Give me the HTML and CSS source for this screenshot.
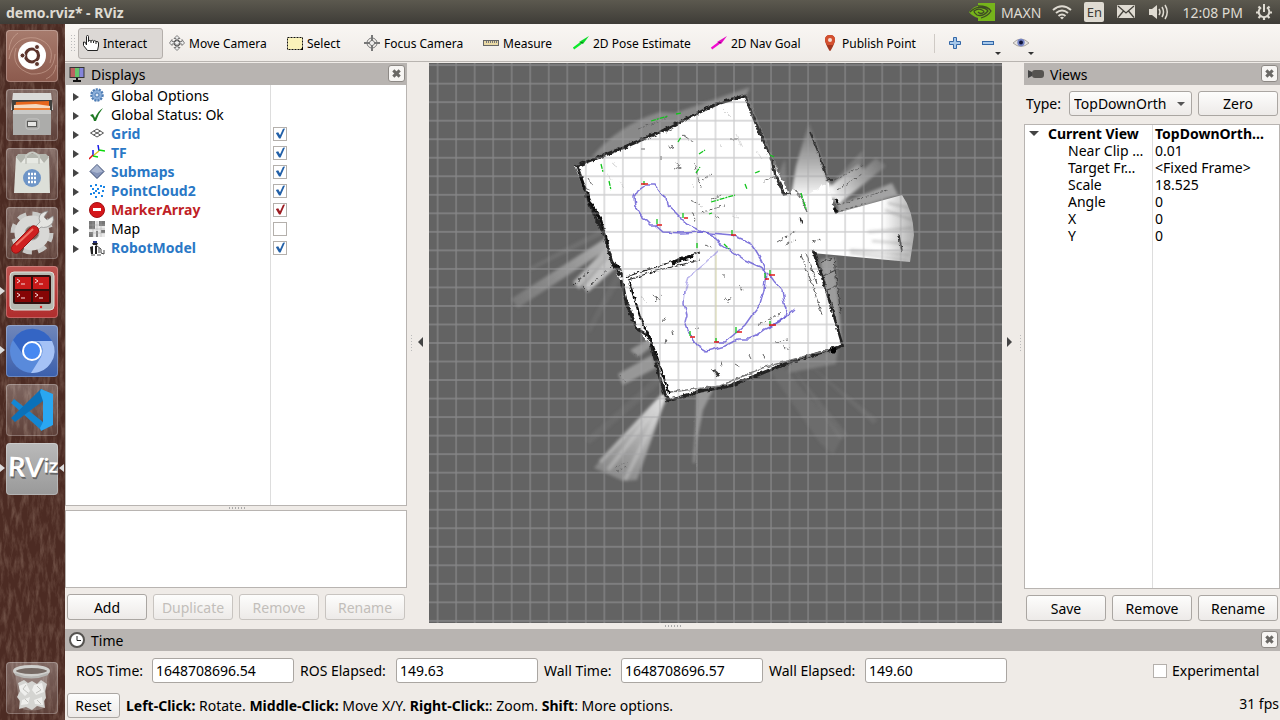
FILE: index.html
```html
<!DOCTYPE html>
<html lang="en">
<head>
<meta charset="utf-8">
<title>demo.rviz* - RViz</title>
<link rel="stylesheet" href="styles.css">
</head>
<body>
<header class="menubar">
  <h1 class="window-title">demo.rviz* - RViz</h1>
  <div class="indicators">
    <svg class="ind-nvidia" width="26" height="18" viewBox="0 0 26 18"><path d="M9 0H26V18H9z" fill="#76b41b"/><path d="M0 9Q5 3 9 3V1Q19 1 24 8Q19 15 9 17V15Q3 13 0 9z" fill="#76b41b"/><path d="M9 3Q19 3 22 8Q19 13 12 15M1 9Q6 4 12 4.500Q17 5 19 8Q14 14 8 12Q5 10 5 8Q9 5 13 7Q15 8 15 9Q12 12 9 9" fill="none" stroke="#3e4a25" stroke-width="1.300"/></svg>
    <span class="ind-text">MAXN</span>
    <svg class="ind-wifi" width="20" height="16" viewBox="0 0 20 16" fill="none" stroke="#dfdbd2" stroke-width="2"><path d="M1 6Q10-1.500 19 6M4 9Q10 4 16 9M6.500 12Q10 9 13.500 12"/><path d="M8 13.500L10 15.500L12 13.500Q10 12 8 13.500" fill="#dfdbd2" stroke="none"/></svg>
    <span class="ind-lang">En</span>
    <svg class="ind-mail" width="18" height="14" viewBox="0 0 18 14"><rect width="18" height="13" rx="1" fill="#dfdbd2"/><path d="M1 1L9 8L17 1M1 12.500L6.500 6M17 12.500L11.500 6" fill="none" stroke="#45433c" stroke-width="1.300"/></svg>
    <svg class="ind-sound" width="20" height="16" viewBox="0 0 20 16"><path d="M0 5H3L8 1V15L3 11H0z" fill="#dfdbd2"/><path d="M10 5Q12 8 10 11M13 3Q16 8 13 13M16 1Q20.500 8 16 15" fill="none" stroke="#dfdbd2" stroke-width="1.500"/></svg>
    <span class="ind-text ind-clock">12:08 PM</span>
    <svg width="16" height="16" viewBox="0 0 16 16" fill="none" stroke="#dfdbd2"><path d="M5 3.500A5.300 5.300 0 1 0 11 3.500M8 0V8" stroke-width="2"/><path d="M2.500 2.500L4.500 4.500M13.500 2.500L11.500 4.500M0 8.500H3M13 8.500H16M2.500 14L4.500 12M13.500 14L11.500 12M8 13.500V16" stroke-width="2.200"/></svg>
  </div>
</header>

<div class="desktop">
  <nav class="launcher" aria-label="Launcher">
    <svg class="wood" aria-hidden="true"><filter id="grain" x="0" y="0" width="1" height="1"><feTurbulence type="fractalNoise" baseFrequency="0.250 0.060" numOctaves="4" seed="7"/><feColorMatrix values="0 0 0 0 .58  0 0 0 0 .43  0 0 0 0 .34  1.800 0 0 0 -.75"/></filter><rect width="100%" height="100%" filter="url(#grain)"/></svg>
    <button class="tile tile-dash" aria-label="Search your computer"><svg viewBox="0 0 52 52"><g fill="none" stroke="#d8b3a4" stroke-opacity=".5"><path d="M3 29Q8 5 30 8Q50 14 44 33M49 24Q48 45 25 44Q4 37 10 18M12 3Q4 8 3 20M40 49Q49 45 50 35"/></g><circle cx="26" cy="25.500" r="14" fill="#fff"/><circle cx="26" cy="25.500" r="6.500" fill="none" stroke="#5c342c" stroke-width="3.200"/><g fill="#5c342c" stroke="#fff" stroke-width="1"><circle cx="16.500" cy="25.500" r="2.500"/><circle cx="31" cy="17" r="2.500"/><circle cx="31" cy="34" r="2.500"/></g></svg></button>
    <button class="tile" aria-label="Files"><svg viewBox="0 0 52 52"><path d="M7 4H45L47 21H5z" fill="#dadad8"/><path d="M6 11H46V22H6z" fill="#41413e"/><path d="M10 13L43 12V21H9z" fill="#e7661c"/><path d="M8 16L30 15L44 17V20H8z" fill="#f6d9bf"/><path d="M8 19H44V22H8z" fill="#ed8138"/><path d="M7 21H45V46H7z" fill="#acacaa"/><path d="M7 21H45V25H7z" fill="#cacac8"/><rect x="20" y="30" width="13" height="10" rx="2" fill="#a0a09e" stroke="#c8c8c6"/><rect x="21.500" y="32.500" width="9" height="5" fill="#e6e6e4" stroke="#595957"/></svg></button>
    <button class="tile" aria-label="Software"><svg viewBox="0 0 52 52"><path d="M10 8H43L44 45H8z" fill="#dcdfd8"/><path d="M10 9L15 15H38L43 9L40 6H12z" fill="#b3b5ad"/><path d="M15 15L19 10H34L38 15" fill="#e7e9e3"/><path d="M20 16V8Q26 1 33 8V16" fill="none" stroke="#c8cac3" stroke-width="2"/><circle cx="26" cy="30" r="9" fill="#6e95c7"/><path d="M22 26H30M22 30H30M22 34H30" stroke="#fff" stroke-width="2.500" stroke-dasharray="2 1"/></svg></button>
    <button class="tile" aria-label="System Settings"><svg viewBox="0 0 52 52"><circle cx="26" cy="26" r="18.500" fill="none" stroke="#c9c9c7" stroke-width="6" stroke-dasharray="8.500 6"/><circle cx="26" cy="26" r="12" fill="none" stroke="#d8d8d6" stroke-width="11"/><circle cx="26" cy="26" r="7" fill="#7d6159" stroke="#a5a5a2"/><path d="M27 22L34 15Q31 8 38 5L42 4L38 10L41 13L47 9Q49 17 41 20Q37 21 35 20L30 25z" fill="#e4e4e1" stroke="#888" stroke-width=".7"/><path d="M25 20Q28 17 32 21Q34 25 31 27L13 45Q9 48 6 44Q4 40 8 37z" fill="#cf2020" stroke="#991414"/><path d="M10 38L27 22" stroke="#ef7566" stroke-width="2"/></svg></button>
    <button class="tile tile-red" aria-label="Terminator"><svg viewBox="0 0 52 52"><rect x="4" y="6" width="44" height="38" rx="4" fill="#b7bab2" stroke="#e0e2db"/><rect x="7" y="9" width="38" height="29" rx="2" fill="#30100f"/><path d="M9 11H25V23H9zM27 11H43V23H27z" fill="#c91a1a"/><path d="M9 25H25V36H9zM27 25H43V36H27z" fill="#850505"/><path d="M11 13L14 15L11 17M15 18H19M29 13L32 15L29 17M33 18H37M11 27L14 29L11 31M15 32H19M29 27L32 29L29 31M33 32H37" fill="none" stroke="#f5dada"/><circle cx="35" cy="41" r="1.200" fill="#e01a1a"/></svg></button>
    <button class="tile tile-blue" aria-label="Chromium"><svg viewBox="0 0 52 52"><circle cx="26" cy="26" r="22" fill="#598adb"/><path d="M7 15A22 22 0 0 1 46 16L26 16Q18 18 16 28z" fill="#3465c4"/><path d="M26 16H46A22 22 0 0 1 25 48L35 32Q39 23 33 17z" fill="#a5c2f6"/><circle cx="26" cy="26" r="9" fill="#4688f1" stroke="#fff" stroke-width="2"/></svg></button>
    <button class="tile" aria-label="Visual Studio Code"><svg viewBox="0 0 52 52"><path d="M5 19L8 15L37 38V45L35 46z" fill="#1387d3"/><path d="M5 34L9 38L37 17V7L35 5z" fill="#0b71b9"/><path d="M35 5L47 10V41L35 47L34 44L37 38V17L34 8z" fill="#2aa7f1"/></svg></button>
    <button class="tile tile-grey" aria-label="RViz"><svg viewBox="0 0 52 52"><g font-family="Lato" font-weight="700" font-size="24" transform="rotate(2 26 26)"><text x="3" y="36" fill="#666"><tspan font-size="27">RV</tspan><tspan font-size="20" dy="-5">iz</tspan></text><text x="2" y="34" fill="#fff"><tspan font-size="27">RV</tspan><tspan font-size="20" dy="-5">iz</tspan></text></g></svg></button>
    <button class="tile tile-trash" aria-label="Trash"><svg viewBox="0 0 52 52"><path d="M9 10H42L38 46Q26 51 14 46z" fill="#c8c4c1" opacity=".35"/><path d="M12 21L18 18L22 21L26 19L31 22L35 18L41 22L39 29L40 36L38 39L39 46L31 44L26 48L20 45L13 47L14 39L11 35L14 29z" fill="#d4d4d1"/><path d="M13 24L20 21L24 29L19 34L14 29M28 23L36 21L38 30L30 33L26 28M16 38L24 35L22 42L15 43M28 38L36 35L37 43L29 42" fill="#efefed"/><path d="M20 23L17 27L22 31M31 24L35 28L30 31M19 37L22 40M31 38L35 42" stroke="#c3c3bf" fill="none"/><ellipse cx="25.500" cy="9" rx="17" ry="4.500" fill="#766a64" stroke="#cfcfcc" stroke-width="3"/><path d="M9 12Q25 19 42 12" stroke="#b5b5b2" fill="none" stroke-width="2"/></svg></button>
  </nav>

  <main class="app">
    <div class="toolbar" role="toolbar" aria-label="Tools">
      <i class="grip"></i>
      <div class="tools">
        <button class="tool tool-on"><svg viewBox="0 0 16 16"><path d="M3.500 10V1.500Q3.500 .5 4.500 .5Q5.500 .5 5.500 1.500V6.500Q6.500 4.500 8 6Q9.500 4.500 10.500 6Q12 5 13 6.500Q15.500 6 15.500 8V11L14.500 15.500H4.500L.5 10.500V7Q2.500 6 3.500 10M8 6V8M10.500 6V8M13 6.500V9" fill="#fff" stroke="#222"/></svg>Interact</button>
        <button class="tool"><svg viewBox="0 0 16 16"><path d="M8 .5L11 3.500H9V6.500H13V4.500L15.500 8L13 10.500V9H9V12.500H11L8 15.500L5 12.500H7V9H3V10.500L.5 8L3 4.500V6.500H7V3.500H5z" fill="#eee" stroke="#666" stroke-width=".8"/><circle cx="8" cy="8" r="3" fill="none" stroke="#555"/></svg>Move Camera</button>
        <button class="tool"><svg viewBox="0 0 16 16"><rect x=".5" y="2.500" width="15" height="12" fill="#fbf3ba" stroke="#111" stroke-dasharray="2 1"/><path d="M16 12V15H13z" fill="#000"/></svg>Select</button>
        <button class="tool"><svg viewBox="0 0 16 16" fill="none" stroke="#777"><circle cx="8" cy="8" r="5"/><circle cx="8" cy="8" r="2.500"/><path d="M7.500 0V6M8.500 0V6M7.500 10V16M8.500 10V16M0 7.500H6M0 8.500H6M10 7.500H16M10 8.500H16"/><path d="M8 6V10M6 8H10" stroke="#eee"/></svg>Focus Camera</button>
        <button class="tool"><svg viewBox="0 0 16 16"><rect x=".5" y="5.500" width="15" height="5" fill="#ead9a4" stroke="#666"/><path d="M3.500 6V8M5.500 6V8M7.500 6V8M9.500 6V8M11.500 6V8M13.500 6V8" stroke="#777"/></svg>Measure</button>
        <button class="tool"><svg viewBox="0 0 16 16"><path d="M.5 13.500L8 8" stroke="#0ce92a" stroke-width="2.200"/><path d="M6 7L16 1L10 9z" fill="#0dd929"/><path d="M7 7L10 7L9 9z" fill="#087d18"/></svg>2D Pose Estimate</button>
        <button class="tool"><svg viewBox="0 0 16 16"><path d="M.5 13.500L8 8" stroke="#f20ad0" stroke-width="2.200"/><path d="M6 7L16 1L10 9z" fill="#e50bc3"/><path d="M7 7L10 7L9 9z" fill="#7d086d"/></svg>2D Nav Goal</button>
        <button class="tool"><svg viewBox="0 0 16 16"><path d="M8 0Q13 0 13 5Q13 8 9 15Q8 17 7 15Q3 8 3 5Q3 0 8 0" fill="#a3361f"/><path d="M8 0Q13 0 13 5Q13 7 11 10H5Q3 7 3 5Q3 0 8 0" fill="#d4502f"/><circle cx="8" cy="5" r="2" fill="#f4dcd3"/></svg>Publish Point</button>
      </div>
      <i class="separator"></i>
      <button class="tool tool-icon" aria-label="Add tool"><svg viewBox="0 0 16 16"><path d="M6.500 2.500H9.500V6.500H13.500V9.500H9.500V13.500H6.500V9.500H2.500V6.500H6.500z" fill="#a7c8ea" stroke="#3468a8"/></svg></button>
      <button class="tool tool-icon tool-menu" aria-label="Remove tool"><svg viewBox="0 0 16 16"><rect x="2.500" y="6.500" width="11" height="3" fill="#a7c8ea" stroke="#3468a8"/></svg></button>
      <button class="tool tool-icon tool-menu" aria-label="View options"><svg viewBox="0 0 16 16"><path d="M0 8Q8 0 16 8Q8 15 0 8" fill="#e6e3e0" stroke="#aaa5a0"/><circle cx="8" cy="7.500" r="3.700" fill="#7583c4"/><circle cx="8" cy="7.500" r="2" fill="#10143a"/></svg></button>
    </div>

    <div class="workspace">
      <section class="dock dock-left" aria-label="Displays">
        <div class="dock-head"><svg viewBox="0 0 16 16"><rect x=".5" y="1" width="15" height="11" fill="#333"/><path d="M1.500 2H6V11H1.500z" fill="#bc6161"/><path d="M6 2H10.500V11H6z" fill="#66c56c"/><path d="M10.500 2H14.500V11H10.500z" fill="#8585db"/><path d="M7 12H9V14H12V16H4V14H7z" fill="#111"/></svg><h2>Displays</h2><button class="close" aria-label="Close Displays"></button></div>
        <div class="tree tree-displays">
          <table>
            <tr><td><i class="arrow"></i><svg viewBox="0 0 16 16"><circle cx="8" cy="7" r="5.500" fill="#8aaed9" stroke="#4d7cb4" stroke-width="2.500" stroke-dasharray="2 1"/><circle cx="8" cy="7" r="4.500" fill="#8aaed9"/><circle cx="8" cy="7" r="2" fill="#dce8f6" stroke="#4d7cb4"/></svg>Global Options</td><td></td></tr>
            <tr><td><i class="arrow"></i><svg viewBox="0 0 16 16"><path d="M1 8L4 7L6 11Q9 4 14 1Q9 7 7 14H5Q4 10 1 8" fill="#1f7a24"/></svg>Global Status: Ok</td><td></td></tr>
            <tr class="on"><td><i class="arrow"></i><svg viewBox="0 0 16 16" fill="none" stroke="#555"><path d="M8 3L14.500 7L8 11L1.500 7zM4.500 5L11.500 9M11.500 5L4.500 9"/></svg>Grid</td><td><input type="checkbox" checked aria-label="Grid"></td></tr>
            <tr class="on"><td><i class="arrow"></i><svg viewBox="0 0 16 16" fill="none" stroke-width="1.500"><path d="M4 11V5M10 6L9 0" stroke="#1818e8"/><path d="M4 11L9 12M10 5L16 6" stroke="#0bd80b"/><path d="M4 10L0 14" stroke="#e01515"/><path d="M5 10L10 6" stroke="#e1c51b"/></svg>TF</td><td><input type="checkbox" checked aria-label="TF"></td></tr>
            <tr class="on"><td><i class="arrow"></i><svg viewBox="0 0 16 16"><path d="M8 .5L15 7.500L8 14.500L1 7.500z" fill="#8594b8" stroke="#38486e"/><path d="M8 1L14 7.500L8 9L2 7z" fill="#a9b5cf"/></svg>Submaps</td><td><input type="checkbox" checked aria-label="Submaps"></td></tr>
            <tr class="on"><td><i class="arrow"></i><svg viewBox="0 0 16 16"><path d="M1 2H3V4H1zM6 1H8V3H6zM11 2H13V4H11zM3 5H5V7H3zM8 5H10V7H8zM13 7H15V9H13zM6 7H8V9H6zM1 10H3V12H1zM4 9H6V11H4zM9 9H11V11H9zM12 12H14V14H12zM6 13H8V15H6zM14 3H16V5H14z" fill="#1b86e6"/></svg>PointCloud2</td><td><input type="checkbox" checked aria-label="PointCloud2"></td></tr>
            <tr class="error"><td><i class="arrow"></i><svg viewBox="0 0 16 16"><circle cx="8" cy="8" r="7.500" fill="#d5161a" stroke="#a30f12"/><rect x="4" y="6" width="8" height="3" fill="#fff"/></svg>MarkerArray</td><td><input type="checkbox" checked aria-label="MarkerArray"></td></tr>
            <tr><td><i class="arrow"></i><svg viewBox="0 0 16 16"><path d="M0 0H16V16H0z" fill="#e9e9e9"/><path d="M0 0H6V8H0zM10 0H16V5H10zM0 11H4V16H0zM7 10H9V16H7zM12 9H16V12H12z" fill="#777"/><path d="M0 4H16M0 8H16M0 12H16M4 0V16M8 0V16M12 0V16" stroke="#aaa" stroke-width=".5"/></svg>Map</td><td><input type="checkbox" aria-label="Map"></td></tr>
            <tr class="on"><td><i class="arrow"></i><svg viewBox="0 0 16 16"><path d="M4 1H8V3H4z" fill="#28347f"/><path d="M3 3H9L8 5H4zM1 7L4 6V14H2zM6 6L8 5V14H6z" fill="#222"/><path d="M8 6L12 9L12 13L15 14V10M2 15H6M8 15H12M10 8V13" stroke="#444" fill="none"/></svg>RobotModel</td><td><input type="checkbox" checked aria-label="RobotModel"></td></tr>
          </table>
        </div>
        <i class="dots"></i>
        <div class="description"></div>
        <div class="actions"><button class="btn">Add</button><button class="btn" disabled>Duplicate</button><button class="btn" disabled>Remove</button><button class="btn" disabled>Rename</button></div>
      </section>

      <button class="collapse collapse-left" aria-label="Hide left dock"><i class="fold fold-left"></i></button>

      <section class="viewport" aria-label="3D view">
        <svg class="scene" viewBox="429 63 573 560" preserveAspectRatio="xMidYMid slice">
          <defs>
            <pattern id="cells" x="715.500" y="343" width="18.525" height="18.525" patternUnits="userSpaceOnUse"><path d="M0 0H18.525M0 0V18.525M18.525 0V18.525M0 18.525H18.525" stroke="#a4a4a6" stroke-opacity=".55" stroke-width="1.300"/></pattern>
            <filter id="rough" x="-.1" y="-.1" width="1.200" height="1.200"><feTurbulence type="fractalNoise" baseFrequency=".25" numOctaves="2" seed="3"/><feDisplacementMap in="SourceGraphic" scale="4" xChannelSelector="R" yChannelSelector="G"/></filter>
            <filter id="wobble" x="-.1" y="-.1" width="1.200" height="1.200"><feTurbulence type="fractalNoise" baseFrequency=".12" numOctaves="1" seed="5"/><feDisplacementMap in="SourceGraphic" scale="6" xChannelSelector="R" yChannelSelector="G"/></filter>
            <filter id="soft"><feGaussianBlur stdDeviation="1.500"/></filter>
            <linearGradient id="fanRight" gradientUnits="userSpaceOnUse" x1="820" y1="0" x2="916" y2="0"><stop offset="0" stop-color="#fff"/><stop offset=".65" stop-color="#fff"/><stop offset="1" stop-color="#fff" stop-opacity=".45"/></linearGradient>
            <linearGradient id="fanUp" gradientUnits="userSpaceOnUse" x1="0" y1="198" x2="0" y2="122"><stop offset="0" stop-color="#fff"/><stop offset="1" stop-color="#ccc" stop-opacity=".1"/></linearGradient>
            <linearGradient id="fanMid" gradientUnits="userSpaceOnUse" x1="832" y1="200" x2="885" y2="160"><stop offset="0" stop-color="#fff"/><stop offset="1" stop-color="#aaa" stop-opacity=".25"/></linearGradient>
            <linearGradient id="ray" gradientUnits="userSpaceOnUse" x1="612" y1="245" x2="505" y2="310"><stop offset="0" stop-color="#ccc" stop-opacity=".7"/><stop offset=".5" stop-color="#bbb" stop-opacity=".5"/><stop offset="1" stop-color="#aaa" stop-opacity=".25"/></linearGradient>
            <linearGradient id="rayDown" gradientUnits="userSpaceOnUse" x1="664" y1="395" x2="612" y2="485"><stop offset="0" stop-color="#f2f2f2" stop-opacity=".9"/><stop offset="1" stop-color="#aaa" stop-opacity=".45"/></linearGradient>
          </defs>
          <rect x="-600" y="-600" width="2600" height="1900" fill="#636363"/>
          <g filter="url(#soft)">
            <path d="M591 158Q618 125 660 112L675 113L750 87L744 101L660 136z" fill="#9a9a9a" opacity=".7"/>
            <path d="M606 238L511 299L518 308L609 248z" fill="url(#ray)"/>
            <path d="M603 228L528 268L532 270L604 234z" fill="#aaa" opacity=".18"/>
            <path d="M608 246L573 282L579 289L613 252z" fill="#ccc" opacity=".8"/>
            <path d="M613 252L583 286L588 292L621 263z" fill="#ddd" opacity=".8"/>
            <path d="M619 267L587 330L590 333L622 277z" fill="#999" opacity=".15"/>
            <path d="M651 338L630 350L638 357L654 345zM652 355L618 374L623 385L656 368z" fill="#bbb" opacity=".6"/>
            <path d="M658 375L585 440L590 444L662 382z" fill="#999" opacity=".15"/>
            <path d="M663 393L604 456L594 468L608 474L623 481L637 480L666 398z" fill="url(#rayDown)"/>
            <path d="M662 396L600 462M664 398L608 470M665 398L625 480" stroke="#ddd" stroke-opacity=".4" stroke-width="4"/>
            <path d="M697 388L714 371L714 388L703 410L697 440L695 463L693 463L696 420z" fill="#bbb" opacity=".6"/>
            <path d="M770 371L820 443L833 455L842 437L784 367z" fill="#999" opacity=".16"/>
            <path d="M790 365L848 435L840 440zM806 362L878 420L873 424z" fill="#aaa" opacity=".15"/>
            <path d="M790 361L838 349L836 364L788 373z" fill="#aaa" opacity=".4"/>
            <path d="M792 190L796 166L809 122L828 181L836 193L830 203L790 205z" fill="url(#fanUp)"/>
            <path d="M828 188L858 164L864 169L876 158L886 166L838 205z" fill="url(#fanMid)"/>
            <path d="M832 183L863 150L862 165z" fill="#aaa" opacity=".35"/>
            <path d="M838 205L892 183L898 195L838 214z" fill="#aaa" opacity=".9"/>
            <path d="M820 260L835 257L837 284L842 343L829 318z" fill="#b5b5b5" opacity=".7"/>
            <path d="M785 159L788 195L772 188z" fill="#999" opacity=".5"/>
          </g>
          <path d="M833 214L902 195Q913 210 914 235L910 262L812 253L805 210z" fill="url(#fanRight)"/>
          <g filter="url(#soft)"><path d="M868 232L912 228M872 241L911 244M850 250L909 255M850 253L907 260M885 210L912 220M888 203L910 208" stroke="#777" stroke-opacity=".4" stroke-width="2"/></g>
          <path d="M575 167L622 147L660 131L700 111L720 102L744 95L758 126L774 162L788 192L796 189L806 196L828 182L835 214L836 252L813 252L820 275L834 320L843 347L795 359L730 384L668 401L652 348L638 329L622 284L612 261L604 235L591 208z" fill="#fff" filter="url(#rough)"/>
          <g fill="none" filter="url(#rough)">
            <path d="M744 96L720 103L700 112L660 132L620 149L577 166L591 207L604 234L612 262L622 277" stroke="#202020" stroke-width="3"/>
            <path d="M580 176L592 206L600 218L608 244M613 264L622 270" stroke="#111" stroke-width="2.500"/>
            <path d="M745 96L757 126L771 157L776 176L784 194L791 193" stroke="#333" stroke-width="3"/>
            <path d="M748 98L776 166L787 187" stroke="#777" stroke-width="1.500"/>
            <path d="M622 280L626 302L637 329L649 336L661 382L668 401" stroke="#222" stroke-width="3"/>
            <path d="M629 281L641 320L651 340L669 393" stroke="#111" stroke-width="2"/>
            <path d="M628 280L652 272L700 260M626 277L700 252" stroke="#222" stroke-width="1.200"/>
            <path d="M672 263L692 256" stroke="#111" stroke-width="3.500"/>
            <path d="M668 401L700 391L730 386L790 362L842 346" stroke="#222" stroke-width="3"/>
            <path d="M670 392L720 386L762 368L828 350" stroke="#777" stroke-width="1.500"/>
            <path d="M831 350L836 350" stroke="#000" stroke-width="5"/>
            <path d="M813 250L822 276L836 323L843 347" stroke="#222" stroke-width="2.500"/>
            <path d="M801 254L812 284L822 315M806 253L817 284" stroke="#555" stroke-width="1"/>
            <path d="M820 263L834 258L837 284L841 314M823 276L838 269M827 290L838 286" stroke="#444" stroke-width="1.200"/>
            <path d="M810 132L819 154L828 180L833 180" stroke="#333" stroke-width="1.800"/>
            <path d="M834 180L864 165M838 190L862 174M837 205L888 190M836 213L865 203" stroke="#555" stroke-dasharray="3 2"/>
            <path d="M836 199L838 204M834 208L837 213" stroke="#111" stroke-width="3"/>
            <path d="M795 189L803 201L807 212" stroke="#777" stroke-width="1.500"/>
            <path d="M800 217L802 224M899 235L902 252" stroke="#333" stroke-width="1.500"/>
            <path d="M574 285L590 270M583 287L588 292M616 263L590 285" stroke="#333" stroke-dasharray="3 3"/>
            <path d="M713 369L719 376" stroke="#333" stroke-width="3"/>
            <path d="M620 375L627 385M634 354L640 358M615 467L628 462M617 471L627 467" stroke="#666" stroke-dasharray="2 2"/>
            <path d="M695 420L697 470" stroke="#777" stroke-dasharray="2 3"/>
          </g>
          <g fill="none" stroke="#666" stroke-width="1" filter="url(#rough)">
            <path d="M638 129L668 118M666 132L675 128M668 146L675 149M671 144L674 150M661 156L661 160M677 163L680 169M675 169L681 166M683 135L693 142M694 163L701 188M702 180L711 174M690 200L703 206M701 213L725 205M711 199L724 194M763 181L776 176M777 242L796 231M730 139L739 139M641 149L645 149M588 178L592 185M586 188L590 190" stroke-dasharray="7 2 3 2"/>
            <path d="M653 295L660 300M665 317L663 323M672 331L673 335M666 339L665 344M655 301L661 296M724 298L730 303M727 301L732 298M740 286L742 291M724 274L724 279M775 342L788 340M782 345L790 350M763 354L765 359M721 361L722 366M735 364L740 367M715 216L720 218M704 244L713 249M693 212L695 221M749 355L751 359M695 329L699 328M785 245L796 240M812 242L821 239M758 325L782 313" stroke-dasharray="5 2 2 2"/>
            <path d="M612 163L617 166M620 181L624 188M722 109L731 118M736 134L742 148M756 150L762 159M720 144L721 147M691 184L695 188M607 172L611 180M640 296L647 303M732 216L739 218" stroke-opacity=".25"/>
          </g>
          <rect x="-600" y="-600" width="2600" height="1900" fill="url(#cells)"/>
          <g class="trail" filter="url(#wobble)">
            <path d="M645 185L638 190L634 197L635 206L641 216L650 225L656 225L664 232L682 233L700 232L732 235L742 239L750 243L755 250L761 260L766 272L764 290L760 305L752 315L745 325L737 332L725 342L716 342"/>
            <path d="M645 185L655 185L660 192L666 197L667 205L676 213L683 220L690 226L701 231L712 235L720 243L735 253L745 260L760 267L768 273L773 280L782 290L784 303L787 308L785 317L778 323L765 329L755 336L748 339L738 339L725 346L707 351L697 345L689 333L685 322"/>
            <path d="M685 322L687 315L684 303L685 290" stroke-opacity=".8"/><path d="M685 290L689 278L696 271L707 262L718 251" stroke-opacity=".45"/><path d="M794 310L783 319L770 326"/>
          </g>
          <path d="M716 255V342" stroke="#d7d58c" stroke-opacity=".6"/>
          <g fill="none" stroke="#11c51b" stroke-width="1.300"><path d="M651 121L668 116M676 114L681 113M678 142L681 137M601 164L603 172M609 181L611 190M699 154L705 150M711 202L735 195M709 214L712 213M696 173L700 167M770 155L774 157M755 173L760 171M745 184L747 189M801 193L806 209M697 243V248M724 244L729 249" stroke-dasharray="5 1 2 1"/><path d="M644 185V181M657 224V219M683 218V213M732 235V230M770 275V270M765 278V273M690 336V331M736 333V327M770 326V321M716 342V338"/></g>
          <g stroke="#e11a1a" stroke-width="1.500"><path d="M641 184H648M657 225H662M684 218H688M731 235H736M769 275H775M690 337H695M737 332H742M769 325H776M714 342H719M765 279H769"/></g>
        </svg>
      </section>

      <button class="collapse collapse-right" aria-label="Hide right dock"><i class="fold fold-right"></i></button>

      <section class="dock dock-right" aria-label="Views">
        <div class="dock-head"><svg viewBox="0 0 16 16"><path d="M0 4L4 6V10L0 12z" fill="#444"/><rect x="4" y="4" width="12" height="8" rx="3" fill="#555350"/></svg><h2>Views</h2><button class="close" aria-label="Close Views"></button></div>
        <div class="view-type"><label for="type">Type:</label><select id="type"><option>TopDownOrth</option></select><button class="btn">Zero</button></div>
        <div class="tree tree-views">
          <table>
            <tr class="current"><td><i class="arrow arrow-open"></i>Current View</td><td>TopDownOrth…</td></tr>
            <tr><td>Near Clip …</td><td>0.01</td></tr>
            <tr><td>Target Fr…</td><td>&lt;Fixed Frame&gt;</td></tr>
            <tr><td>Scale</td><td>18.525</td></tr>
            <tr><td>Angle</td><td>0</td></tr>
            <tr><td>X</td><td>0</td></tr>
            <tr><td>Y</td><td>0</td></tr>
          </table>
        </div>
        <div class="actions"><button class="btn">Save</button><button class="btn">Remove</button><button class="btn">Rename</button></div>
      </section>
    </div>
    <i class="dots dots-time"></i>

    <section class="time" aria-label="Time">
      <div class="dock-head"><svg viewBox="0 0 16 16"><circle cx="8" cy="8" r="7" fill="#fff" stroke="#555350" stroke-width="2"/><path d="M8 4V8.500H12" fill="none" stroke="#222"/></svg><h2>Time</h2><button class="close" aria-label="Close Time"></button></div>
      <div class="clocks">
        <label for="rt">ROS Time:</label><input id="rt" type="text" value="1648708696.54">
        <label for="re">ROS Elapsed:</label><input id="re" type="text" value="149.63">
        <label for="wt">Wall Time:</label><input id="wt" type="text" value="1648708696.57">
        <label for="we">Wall Elapsed:</label><input id="we" type="text" value="149.60">
        <label class="experimental"><input type="checkbox">Experimental</label>
      </div>
      <footer class="status"><button class="btn">Reset</button><p><b>Left-Click:</b> Rotate. <b>Middle-Click:</b> Move X/Y. <b>Right-Click:</b>: Zoom. <b>Shift</b>: More options.</p><span>31 fps</span></footer>
    </section>
  </main>
</div>
</body>
</html>
```
FILE: styles.css
```css
* { box-sizing: border-box; }
body {
  margin: 0;
  min-height: 100vh;
  display: flex;
  flex-direction: column;
  font: 14px/17px "Noto Sans", "Open Sans", sans-serif;
  color: #000;
  background: #efebe7;
}
button, input, select { font: inherit; color: inherit; margin: 0; }
h1, h2, p { margin: 0; font-size: inherit; font-weight: normal; }
table { width: 100%; table-layout: fixed; border-collapse: collapse; }
td { padding: 0; white-space: nowrap; }

/* top panel */
.menubar {
  height: 24px;
  display: flex;
  align-items: center;
  justify-content: space-between;
  padding: 0 8px 0 6px;
  color: #dfdbd2;
  background: linear-gradient(#5c594f, #3e3c37);
}
.window-title { font-size: 14px; font-weight: bold; }
.indicators { display: flex; align-items: center; }
.ind-nvidia { margin-right: 6px; }
.ind-wifi { margin: 0 12px 0 11px; }
.ind-lang {
  width: 20px;
  height: 20px;
  border-radius: 2px;
  background: #dfdbd2;
  color: #3e3c37;
  font-size: 13px;
  line-height: 20px;
  text-align: center;
}
.ind-mail { margin: 0 14px 0 13px; }
.ind-clock { margin: 0 13px; }

/* launcher */
.desktop { flex: 1; display: flex; }
.launcher {
  position: relative;
  flex: 0 0 65px;
  display: flex;
  flex-direction: column;
  gap: 7px;
  padding: 6px 7px 6px 6px;
  background: #4c2b23;
}
.wood { position: absolute; inset: 0; width: 100%; height: 100%; opacity: 0.35; }
.tile {
  position: relative;
  width: 52px;
  height: 52px;
  padding: 0;
  border: 0;
  border-radius: 4px;
  box-shadow: inset 0 0 0 1px rgba(255, 255, 255, 0.25);
  background: linear-gradient(rgba(255, 255, 255, 0.28), rgba(255, 255, 255, 0.1));
}
.tile svg { display: block; width: 52px; height: 52px; }
.tile-dash { background: linear-gradient(#a77b6d, #8c5a4d); }
.tile-red { background: linear-gradient(#bf5551, #b02d2d); }
.tile-blue { background: linear-gradient(#7187ba, #3b5fac); }
.tile-grey { background: linear-gradient(#bababa, #999); }
.tile-trash { margin-top: auto; }
.tile-red::before, .tile-blue::before, .tile-grey::before, .tile-grey::after {
  content: "";
  position: absolute;
  left: -6px;
  top: 21px;
  border: 4px solid transparent;
  border-left: 5px solid #ddd;
  border-right: 0;
}
.tile-grey::after {
  left: auto;
  right: -6px;
  border: 4px solid transparent;
  border-right: 5px solid #ddd;
  border-left: 0;
}

/* toolbar */
.app { flex: 1; min-width: 0; display: flex; flex-direction: column; }
.toolbar {
  height: 38px;
  display: flex;
  align-items: center;
  padding: 1px 0 0 5px;
  background: linear-gradient(#f9f6f3, #efebe7);
  border-bottom: 1px solid #b8b4b0;
}
.grip {
  width: 5px;
  height: 18px;
  margin-right: 3px;
  background: radial-gradient(circle, #bbb 1px, transparent 1px) 0 0 / 3px 3px;
}
.tools { display: grid; grid-template-columns: 85px 118px 77px 119px 90px 138px 111px 112px; }
.tool {
  height: 31px;
  display: flex;
  align-items: center;
  gap: 4px;
  padding: 0 4px 0 5px;
  border: 1px solid transparent;
  border-radius: 3px;
  background: none;
  font-size: 12px;
  white-space: nowrap;
}
.tool svg { flex: none; width: 16px; height: 16px; }
.tool-on { border-color: #b4afab; background: #dcd8d5; padding-left: 4px; }
.separator { width: 1px; height: 19px; margin: 0 6px; background: #cfcac5; }
.tool-icon { position: relative; width: 33px; }
.tool-menu::after {
  content: "";
  position: absolute;
  right: 5px;
  bottom: 3px;
  border: 3px solid transparent;
  border-top-color: #333;
  border-bottom: 0;
}

/* docks */
.workspace { flex: 1; display: flex; padding-top: 1px; }
.dock { display: flex; flex-direction: column; }
.dock-left { flex: 0 0 342px; }
.dock-right { flex: 0 0 256px; }
.dock-head {
  height: 22px;
  display: flex;
  align-items: center;
  gap: 6px;
  padding: 0 2px 0 4px;
  background: #b8b4b1;
}
.dock-head svg { width: 16px; height: 16px; }
.dock-head h2 { flex: 1; }
.close {
  position: relative;
  width: 17px;
  height: 17px;
  margin-bottom: 2px;
  padding: 0;
  border: 1px solid #8d8985;
  border-radius: 3px;
  background: #f7f5f3;
}
.close::before, .close::after {
  content: "";
  position: absolute;
  left: 3px;
  top: 6px;
  width: 9px;
  height: 3px;
  background: #6a6865;
  transform: rotate(45deg);
}
.close::after { transform: rotate(-45deg); }
.tree { flex: 1; background: #fff; border: 1px solid #b8b4b1; }
.tree-displays {
  border-top: 0;
  padding-top: 1px;
  background: linear-gradient(#ddd, #ddd) 204px 0 / 1px 100% no-repeat #fff;
}
.tree-displays td { height: 19px; vertical-align: middle; }
.tree-displays td:first-child { width: 207px; padding-left: 7px; }
.tree-displays svg { width: 16px; height: 16px; margin: 0 6px 0 10px; vertical-align: -3px; }
.arrow {
  display: inline-block;
  border: 4px solid transparent;
  border-left: 6px solid #444;
  border-right: 0;
}
.arrow-open {
  border: 5px solid transparent;
  border-top: 5px solid #444;
  border-bottom: 0;
  margin: 0 9px 3px 0;
}
.on, .error { color: #2a78c6; font-weight: bold; }
.error { color: #c01f26; }
input[type="checkbox"] {
  appearance: none;
  display: block;
  width: 14px;
  height: 14px;
  border: 1px solid #b4b0ac;
  background: #fff;
  color: #2260a8;
}
.error input[type="checkbox"] { color: #9d1c22; }
input[type="checkbox"]:checked::before {
  content: "";
  display: block;
  width: 12px;
  height: 12px;
  background: currentColor;
  clip-path: polygon(15% 45%, 35% 40%, 50% 65%, 75% 10%, 92% 8%, 55% 92%, 42% 92%);
}
.dots {
  align-self: center;
  width: 17px;
  height: 4px;
  background: radial-gradient(circle, #aaa 1px, transparent 1px) 0 0 / 3px 4px;
}
.description { height: 78px; border: 1px solid #b8b4b1; background: #fff; }
.actions { display: flex; gap: 6px; padding: 6px 2px 9px; }
.actions .btn { flex: 1; }
.dock-right .actions { padding-bottom: 8px; }
.btn {
  height: 26px;
  padding: 0 6px;
  border: 1px solid #aaa6a2;
  border-radius: 3px;
  background: linear-gradient(#fdfdfc, #edeae8);
}
.btn:disabled { color: #c2beba; border-color: #c8c4c0; }
.collapse {
  flex: 0 0 22px;
  display: flex;
  align-items: center;
  padding: 0 0 8px;
  border: 0;
  background: radial-gradient(circle, #bbb 1px, transparent 1px);
  background-size: 3px 3px;
}
.collapse-left {
  padding-left: 11px;
  background: linear-gradient(#efebe7, #efebe7);
}
.collapse-right {
  padding-left: 5px;
  background: linear-gradient(#efebe7, #efebe7);
}
.collapse::before, .collapse-right::after {
  content: "";
  width: 3px;
  height: 17px;
  margin: 0 5px 0 -8px;
  background: radial-gradient(circle, #bbb 1px, transparent 1px) 0 0 / 3px 3px;
}
.collapse-right::before { display: none; }
.collapse-right::after { margin: 0 0 0 7px; }
.fold { border: 5px solid transparent; }
.fold-left { border-right-color: #444; border-left: 0; }
.fold-right { border-left-color: #444; border-right: 0; }
.viewport { position: relative; flex: 1; min-width: 0; margin-bottom: 6px; background: #636363; }
.scene { position: absolute; inset: 0; width: 100%; height: 100%; }
.trail { fill: none; stroke: #6a5ed6; stroke-opacity: 0.85; stroke-width: 1.5px; }
.view-type {
  position: relative;
  display: flex;
  align-items: center;
  gap: 6px;
  padding: 6px 2px 8px;
}
.view-type label { width: 37px; }
.view-type select {
  appearance: none;
  flex: 1;
  min-width: 0;
  height: 25px;
  padding: 0 4px;
  border: 1px solid #aaa6a2;
  border-radius: 3px;
  background: linear-gradient(#fdfdfc, #edeae8);
}
.view-type::after {
  content: "";
  position: absolute;
  right: 95px;
  top: 17px;
  border: 4px solid transparent;
  border-top-color: #555;
  border-bottom: 0;
  pointer-events: none;
}
.view-type .btn { width: 80px; height: 25px; }
.tree-views { background: linear-gradient(#ddd, #ddd) 127px 0 / 1px 100% no-repeat #fff; }
.tree-views td { height: 17px; padding-left: 2px; }
.tree-views td:first-child { width: 128px; padding: 0 4px 0 43px; }
.tree-views .current { font-weight: bold; }
.tree-views .current td:first-child { padding-left: 4px; }
.tree-views .arrow-open { vertical-align: middle; }

/* time */
.dots-time { height: 3px; margin: -5px 0 2px; }
.clocks {
  display: grid;
  grid-template-columns: 70px 142px 90px 142px 71px 142px 90px 142px 1fr;
  gap: 6px;
  align-items: center;
  padding: 7px 16px 10px 11px;
  white-space: nowrap;
}
.clocks input[type="text"] {
  min-width: 0;
  height: 25px;
  padding: 0 3px;
  border: 1px solid #aaa6a2;
  border-radius: 3px;
  background: #fff;
}
.experimental { justify-self: end; width: 111px; display: flex; align-items: center; gap: 5px; }
.status { display: flex; align-items: center; gap: 6px; padding: 0 1px 2px 2px; }
.status .btn { width: 53px; height: 25px; }
.status p { flex: 1; }
.status span { padding-bottom: 5px; }
```
